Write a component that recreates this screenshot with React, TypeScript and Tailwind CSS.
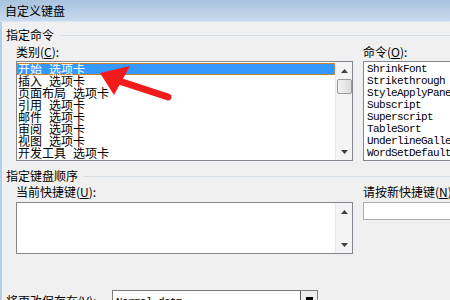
const categories = ["开始", "插入", "页面布局", "引用", "邮件", "审阅", "视图", "开发工具"];

const commands = [
  "ShrinkFont",
  "Strikethrough",
  "StyleApplyPane",
  "Subscript",
  "Superscript",
  "TableSort",
  "UnderlineGallery",
  "WordSetDefault",
];

const cjk = { fontFamily: '"Noto Sans CJK SC", "Liberation Sans", sans-serif' };
const mono = { fontFamily: '"Liberation Mono", monospace' };

function UpArrow() {
  return (
    <svg width="7" height="4" viewBox="0 0 7 4">
      <polygon points="3.5,0 7,4 0,4" fill="#404040" />
    </svg>
  );
}

function DownArrow() {
  return (
    <svg width="7" height="4" viewBox="0 0 7 4">
      <polygon points="0,0 7,0 3.5,4" fill="#404040" />
    </svg>
  );
}

function Scrollbar({ thumb }: { thumb?: boolean }) {
  return (
    <div className="w-[17px] flex flex-col items-center bg-[#f4f4f4] border-l border-[#e8e8e8]">
      <div className="h-[17px] flex items-center justify-center">
        <UpArrow />
      </div>
      {thumb && (
        <div className="w-[15px] h-[15px] rounded-[2px] border border-[#9a9a9a] bg-gradient-to-r from-[#f2f2f2] to-[#dcdcdc]" />
      )}
      <div className="flex-1" />
      <div className="h-[17px] flex items-center justify-center">
        <DownArrow />
      </div>
    </div>
  );
}

function GroupHeader({ text }: { text: string }) {
  return (
    <div className="flex items-center h-[12px]">
      <span className="text-[12px] leading-[12px] text-black whitespace-nowrap">{text}</span>
      <div className="flex-1 h-px bg-[#d5dfe5] ml-[6px]" />
    </div>
  );
}

export default function App() {
  return (
    <div className="w-[450px] h-[300px] overflow-hidden bg-[#f0f0f0] relative" style={cjk}>
      {/* 标题栏 */}
      <div className="h-[22px] pl-[5px] flex items-center bg-gradient-to-b from-[#a9c2df] to-[#c8daee] border-b border-[#dbe6f3]">
        <span className="text-[12px] leading-[12px] text-black">自定义键盘</span>
      </div>

      <div className="border-l-2 border-[#b4cde9] pl-[4px] pt-[7px] h-[278px]">
        <GroupHeader text="指定命令" />

        <div className="flex mt-[5px]">
          <div className="pl-[10px] w-[347px] shrink-0">
            <div className="text-[12px] leading-[12px] h-[12px]">
              类别(<u>C</u>):
            </div>
            <div className="mt-[3px] h-[100px] border border-[#828790] bg-white flex">
              <div className="flex-1 pt-px">
                {categories.map((c, i) => (
                  <div
                    key={c}
                    className={
                      i === 0
                        ? "h-[12px] leading-[12px] text-[12px] pl-[1px] whitespace-nowrap bg-[#3399ff] text-white outline outline-1 outline-dotted outline-[#d08a3a] -outline-offset-1"
                        : "h-[12px] leading-[12px] text-[12px] pl-[1px] whitespace-nowrap text-black"
                    }
                  >
                    {c}
                    <span className="ml-[7px]">选项卡</span>
                  </div>
                ))}
              </div>
              <Scrollbar thumb />
            </div>
          </div>

          <div className="ml-[10px] flex-1">
            <div className="text-[12px] leading-[12px] h-[12px]">
              命令(<u>O</u>):
            </div>
            <div className="mt-[3px] h-[100px] border border-[#828790] bg-white pl-[3px] pt-px overflow-hidden">
              {commands.map((c) => (
                <div
                  key={c}
                  className="h-[12px] leading-[12px] text-[11px] tracking-[-0.6px] whitespace-nowrap text-black"
                  style={mono}
                >
                  {c}
                </div>
              ))}
            </div>
          </div>
        </div>

        <div className="mt-[9px]">
          <GroupHeader text="指定键盘顺序" />
        </div>

        <div className="flex mt-[4px]">
          <div className="pl-[10px] w-[347px] shrink-0">
            <div className="text-[12px] leading-[12px] h-[12px]">
              当前快捷键(<u>U</u>):
            </div>
            <div className="mt-[4px] h-[52px] border border-[#828790] bg-white flex">
              <div className="flex-1" />
              <Scrollbar />
            </div>
          </div>
          <div className="ml-[10px] flex-1">
            <div className="text-[12px] leading-[12px] h-[12px] whitespace-nowrap">
              请按新快捷键(<u>N</u>):
            </div>
            <div className="mt-[4px] h-[18px] border border-[#abadb3] bg-white" />
          </div>
        </div>

        <div className="flex items-start mt-[36px]">
          <div className="w-[106px] pt-[5px] text-[12px] leading-[12px] whitespace-nowrap">
            将更改保存在(<u>V</u>):
          </div>
          <div className="w-[206px] h-[21px] border border-[#7a7a7a] bg-white flex">
            <div
              className="flex-1 pl-[3px] pt-[5px] text-[11px] leading-[12px] tracking-[-0.6px]"
              style={mono}
            >
              Normal.dotm
            </div>
            <div className="w-[17px] border-l border-[#555] bg-[#ececec] flex justify-center pt-[6px]">
              <div className="w-[7px] h-[3px] bg-black" />
            </div>
          </div>
        </div>
      </div>

      {/* 红色箭头 */}
      <svg className="absolute left-0 top-0 pointer-events-none" width="450" height="300">
        <line x1="116" y1="80" x2="168" y2="97" stroke="#f21b1b" strokeWidth="7" strokeLinecap="round" />
        <polygon points="100,73 130,66 114,95" fill="#f21b1b" />
      </svg>
    </div>
  );
}
